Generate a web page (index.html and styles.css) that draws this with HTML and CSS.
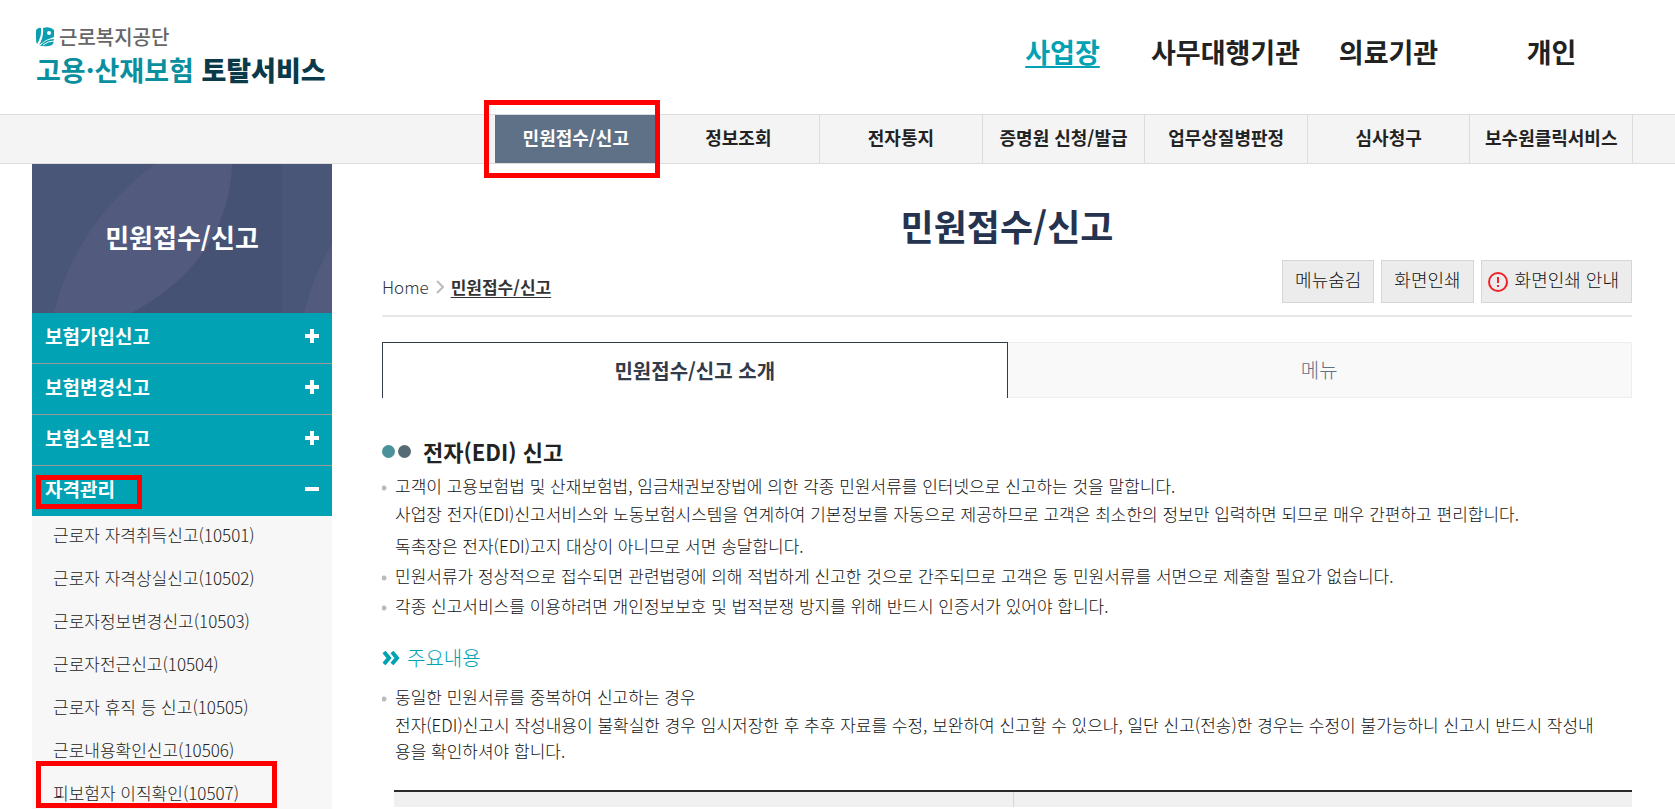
FILE: index.html
```
<!DOCTYPE html>
<html lang="ko">
<head>
    <meta charset="UTF-8">
    <meta name="viewport" content="width=device-width, initial-scale=1.0">
    <title>고용·산재보험 토탈서비스</title>
    <link rel="stylesheet" href="styles.css">
</head>
<body>

    <header class="header">
        <a href="#" class="logo">
            <span class="logo-org">
                <svg class="logo-mark" viewBox="0 0 18 20" aria-hidden="true">
                    <path d="M0 3 Q3 0 5 1 Q6 9 1 17 Q0 15 0 12Z" fill="#0a9fb0"/>
                    <path d="M7 1 Q14 -1 18 3 L18 10 Q11 12 6 16 L3 18 Q8 10 7 1Z" fill="#0a9fb0"/>
                    <circle cx="13" cy="6" r="2" fill="#fff"/>
                    <path d="M4 19 Q10 12 18 12 Q18 16 16 18 Q12 20 7 19Z" fill="#0a9fb0"/>
                    <path d="M7 18 Q12 14 18 14" fill="none" stroke="#fff" stroke-width="1"/>
                </svg>
                근로복지공단
            </span>
            <span class="logo-name">고용·산재보험 <b>토탈서비스</b></span>
        </a>
        <nav class="user-menu">
            <a href="#" class="active">사업장</a>
            <a href="#">사무대행기관</a>
            <a href="#">의료기관</a>
            <a href="#">개인</a>
        </nav>
    </header>

    <div class="gnb">
        <nav class="gnb-list">
            <a href="#" class="active marked mark-gnb">민원접수/신고</a>
            <a href="#">정보조회</a>
            <a href="#">전자통지</a>
            <a href="#">증명원 신청/발급</a>
            <a href="#">업무상질병판정</a>
            <a href="#">심사청구</a>
            <a href="#">보수원클릭서비스</a>
        </nav>
    </div>

    <div class="container">
        <aside class="sidebar">
            <div class="sidebar-title">
                <svg class="sidebar-bg" aria-hidden="true">
                    <defs>
                        <pattern id="leaf" width="250" height="149" patternUnits="userSpaceOnUse">
                            <rect width="250" height="149" fill="#465274"/>
                            <path d="M0 0 H123 Q44 60 22 149 H0Z" fill="#4a5678"/>
                            <path d="M123 0 H200 Q196 97 99 149 H22 Q44 60 123 0Z" fill="#525b7d"/>
                        </pattern>
                    </defs>
                    <rect width="100%" height="100%" fill="url(#leaf)"/>
                </svg>
                <h2>민원접수/신고</h2>
            </div>
            <button class="menu-button">보험가입신고
                <svg viewBox="0 0 14 14" aria-hidden="true"><path d="M0 7H14M7 0V14"/></svg>
            </button>
            <button class="menu-button">보험변경신고
                <svg viewBox="0 0 14 14" aria-hidden="true"><path d="M0 7H14M7 0V14"/></svg>
            </button>
            <button class="menu-button">보험소멸신고
                <svg viewBox="0 0 14 14" aria-hidden="true"><path d="M0 7H14M7 0V14"/></svg>
            </button>
            <button class="menu-button marked mark-menu">자격관리
                <svg viewBox="0 0 14 14" aria-hidden="true"><path d="M0 7H14"/></svg>
            </button>
            <ul class="submenu">
                <li><a href="#">근로자 자격취득신고(10501)</a></li>
                <li><a href="#">근로자 자격상실신고(10502)</a></li>
                <li><a href="#">근로자정보변경신고(10503)</a></li>
                <li><a href="#">근로자전근신고(10504)</a></li>
                <li><a href="#">근로자 휴직 등 신고(10505)</a></li>
                <li><a href="#">근로내용확인신고(10506)</a></li>
                <li class="marked mark-sub"><a href="#">피보험자 이직확인(10507)</a></li>
            </ul>
        </aside>

        <main class="content">
            <h1>민원접수/신고</h1>
            <div class="toolbar">
                <div class="breadcrumb">
                    <a href="#">Home</a>
                    <svg viewBox="0 0 8 14" aria-hidden="true"><path d="M1 1L7 7L1 13"/></svg>
                    <a href="#" class="current">민원접수/신고</a>
                </div>
                <div class="buttons">
                    <button class="button">메뉴숨김</button>
                    <button class="button">화면인쇄</button>
                    <button class="button button-info">
                        <svg viewBox="0 0 20 20" aria-hidden="true">
                            <circle cx="10" cy="10" r="9"/>
                            <path d="M10 5V11M10 13V15"/>
                        </svg>
                        화면인쇄 안내
                    </button>
                </div>
            </div>

            <div class="tabs">
                <button class="tab active">민원접수/신고 소개</button>
                <button class="tab">메뉴</button>
            </div>

            <h3 class="section-title"><i class="dot"></i><i class="dot dark"></i>전자(EDI) 신고</h3>
            <ul class="list">
                <li>고객이 고용보험법 및 산재보험법, 임금채권보장법에 의한 각종 민원서류를 인터넷으로 신고하는 것을 말합니다.
                    <p>사업장 전자(EDI)신고서비스와 노동보험시스템을 연계하여 기본정보를 자동으로 제공하므로 고객은 최소한의 정보만 입력하면 되므로 매우 간편하고 편리합니다.</p>
                    <p class="notice">독촉장은 전자(EDI)고지 대상이 아니므로 서면 송달합니다.</p>
                </li>
                <li>민원서류가 정상적으로 접수되면 관련법령에 의해 적법하게 신고한 것으로 간주되므로 고객은 동 민원서류를 서면으로 제출할 필요가 없습니다.</li>
                <li>각종 신고서비스를 이용하려면 개인정보보호 및 법적분쟁 방지를 위해 반드시 인증서가 있어야 합니다.</li>
            </ul>

            <h4 class="sub-title">
                <svg viewBox="0 0 18 14" aria-hidden="true"><path d="M2 1L7 7L2 13M10 1L15 7L10 13"/></svg>
                주요내용
            </h4>
            <ul class="list">
                <li>동일한 민원서류를 중복하여 신고하는 경우
                    <p>전자(EDI)신고시 작성내용이 불확실한 경우 임시저장한 후 추후 자료를 수정, 보완하여 신고할 수 있으나, 일단 신고(전송)한 경우는 수정이 불가능하니 신고시 반드시 작성내<br>용을 확인하셔야 합니다.</p>
                </li>
            </ul>

            <table class="table">
                <tr><th></th><th></th></tr>
            </table>
        </main>
    </div>

</body>
</html>
```
FILE: styles.css
```
*, *::after {
    box-sizing: border-box;
}
body {
    margin: 0;
    min-height: 100vh;
    display: flex;
    flex-direction: column;
    font-family: "Noto Sans CJK KR", sans-serif;
    font-size: 17px;
    font-weight: 300;
    line-height: 26px;
    color: #111;
    background-color: #fff;
}
a {
    color: inherit;
    text-decoration: none;
}
button {
    font: inherit;
    color: inherit;
    cursor: pointer;
}
h1, h2, h3, h4, p, ul {
    margin: 0;
    padding: 0;
}
ul {
    list-style: none;
}

/* header */
.header {
    display: flex;
    justify-content: space-between;
    height: 114px;
    padding: 0 42px 0 36px;
}
.logo {
    padding-top: 24px;
    white-space: nowrap;
}
.logo-org {
    display: flex;
    align-items: center;
    gap: 5px;
    font-size: 20px;
    font-weight: 500;
    color: #666;
}
.logo-mark {
    width: 18px;
    height: 20px;
}
.logo-name {
    display: block;
    font-size: 27px;
    font-weight: 700;
    line-height: 40px;
    color: #0a8f9f;
}
.logo-name b {
    color: #0a3a4a;
}
.user-menu {
    display: flex;
    width: 652px;
    padding-top: 34px;
}
.user-menu a {
    flex: 1 0 0;
    font-size: 27px;
    font-weight: 700;
    line-height: 36px;
    text-align: center;
    white-space: nowrap;
    color: #222;
}
.user-menu .active {
    color: #00a2b3;
    text-decoration: underline;
    text-decoration-thickness: 2px;
    text-underline-offset: 3px;
}

/* main menu */
.gnb {
    display: flex;
    justify-content: flex-end;
    height: 50px;
    padding-right: 42px;
    background-color: #f4f4f4;
    border-top: 1px solid #dcdcdc;
    border-bottom: 1px solid #dcdcdc;
}
.gnb-list {
    display: flex;
    width: 1138px;
}
.gnb-list a {
    flex: 1;
    font-size: 18px;
    font-weight: 700;
    line-height: 45px;
    text-align: center;
    white-space: nowrap;
    color: #222;
    border-right: 1px solid #dcdcdc;
}
.gnb-list .active {
    color: #fff;
    background-color: #5f7186;
}

/* red highlight frames */
.marked {
    position: relative;
}
.marked::after {
    content: "";
    position: absolute;
    border: 5px solid #f00;
}
.mark-gnb::after {
    inset: -15px -3px -15px -11px;
}
.mark-menu::after {
    top: 9px;
    left: 4px;
    width: 106px;
    height: 34px;
}
.mark-sub::after {
    top: -19px;
    left: 4px;
    width: 241px;
    height: 47px;
}

.container {
    flex: 1;
    display: flex;
    gap: 50px;
    padding: 0 43px 0 32px;
}

/* sidebar */
.sidebar {
    flex: 0 0 300px;
    background-color: #f7f7f7;
}
.sidebar-title {
    display: grid;
    height: 149px;
    color: #fff;
    text-align: center;
}
.sidebar-title > * {
    grid-area: 1 / 1;
}
.sidebar-bg {
    width: 100%;
    height: 100%;
}
.sidebar-title h2 {
    z-index: 1;
    align-self: center;
    padding-bottom: 3px;
    font-size: 26px;
    line-height: 36px;
}
.menu-button {
    display: flex;
    justify-content: space-between;
    align-items: center;
    width: 100%;
    height: 51px;
    padding: 0 13px 5px;
    font-size: 19px;
    font-weight: 700;
    color: #fff;
    background-color: #00a2b3;
    border: none;
    border-bottom: 1px solid #999;
}
.menu-button:last-of-type {
    height: 50px;
    border-bottom: none;
}
.menu-button svg {
    width: 14px;
    height: 14px;
    fill: none;
    stroke: #fff;
    stroke-width: 4;
}
.submenu {
    display: flex;
    flex-direction: column;
    gap: 17px;
    padding-top: 6px;
}
.submenu li {
    padding-left: 21px;
    color: #222;
}

/* content */
.content {
    flex: 1;
    min-width: 0;
}
h1 {
    padding-top: 34px;
    font-size: 36px;
    line-height: 54px;
    text-align: center;
    color: #26334f;
}
.toolbar {
    display: flex;
    justify-content: space-between;
    padding: 8px 0 12px;
    border-bottom: 2px solid #e7e7e7;
}
.breadcrumb {
    display: flex;
    align-items: center;
    gap: 7px;
    padding-top: 11px;
    color: #333;
}
.breadcrumb svg {
    width: 8px;
    height: 14px;
    fill: none;
    stroke: #bbb;
    stroke-width: 2;
}
.breadcrumb .current {
    font-weight: 700;
    text-decoration: underline;
    text-underline-offset: 3px;
}
.buttons {
    display: flex;
    gap: 7px;
}
.button {
    display: flex;
    align-items: center;
    gap: 7px;
    height: 43px;
    padding: 0 12px 5px;
    font-size: 18px;
    background-color: #ececec;
    border: 1px solid #d6d6d6;
}
.button-info {
    padding-left: 6px;
}
.button svg {
    width: 20px;
    height: 20px;
    margin-top: 5px;
    fill: none;
    stroke: #f3202a;
    stroke-width: 2;
}
.tabs {
    display: flex;
    margin-top: 25px;
}
.tab {
    flex: 1;
    height: 56px;
    font-size: 20px;
    color: #5f7186;
    background-color: #f9f9f9;
    border: 1px solid #eee;
    border-left: none;
}
.tab.active {
    font-weight: 700;
    color: #333b4b;
    background-color: #fff;
    border: 1px solid #333b4b;
    border-bottom: none;
}
.section-title {
    display: flex;
    align-items: center;
    gap: 3px;
    padding-top: 36px;
    font-size: 22px;
    line-height: 34px;
    color: #222;
}
.dot {
    width: 13px;
    height: 13px;
    border-radius: 50%;
    background-color: #4a919b;
}
.dot.dark {
    margin-right: 9px;
    background-color: #566b73;
}
.list {
    padding-top: 3px;
}
.list li {
    padding: 2px 0 2px 13px;
    word-break: break-all;
    background: radial-gradient(circle at 2px 17px, #bbb 2px, transparent 3px) no-repeat;
}
.list p {
    padding-top: 2px;
}
.list .notice {
    padding-top: 6px;
}
.sub-title {
    display: flex;
    align-items: center;
    gap: 7px;
    padding: 22px 0 6px;
    font-size: 20px;
    font-weight: 300;
    line-height: 30px;
    color: #00a2b3;
}
.sub-title svg {
    width: 18px;
    height: 14px;
    fill: none;
    stroke: #00a2b3;
    stroke-width: 4;
}
.table {
    width: calc(100% - 12px);
    margin: 24px 0 0 12px;
    table-layout: fixed;
    border-collapse: collapse;
    border-top: 2px solid #2a2a2a;
}
.table th {
    height: 16px;
    padding: 0;
    background-color: #f0f0f0;
}
.table th + th {
    border-left: 1px solid #d6d6d6;
}
```
